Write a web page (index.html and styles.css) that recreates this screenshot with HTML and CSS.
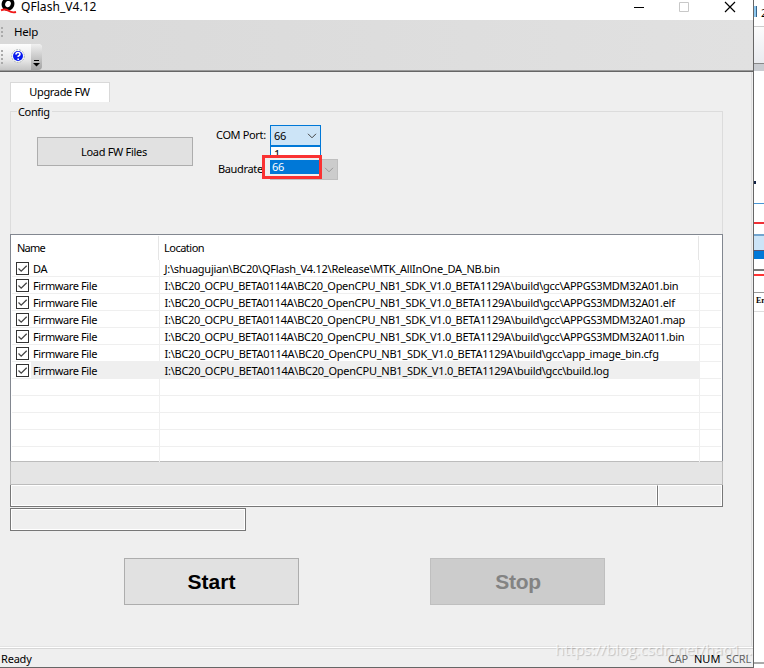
FILE: index.html
```html
<!DOCTYPE html>
<html lang="en">
<head>
<meta charset="utf-8">
<title>QFlash_V4.12</title>
<link rel="stylesheet" href="styles.css">
</head>
<body>
<div class="screen">
  <main class="window">
    <header class="titlebar">
      <svg class="logo" width="18" height="14" viewBox="0 0 18 14"><ellipse cx="8" cy="4" rx="4.500" ry="5" fill="none" stroke="#000" stroke-width="3.600" transform="rotate(25 8 4)"/><path d="M1 10.300Q5 8.500 8.500 10.800T16 12" fill="none" stroke="#f01818" stroke-width="1.900"/></svg>
      <span class="title">QFlash_V4.12</span>
      <svg class="caption" width="102" height="14" viewBox="0 0 102 14" fill="none"><path d="M0 7.500H10" stroke="#000"/><path d="M45.500 2.500H54.500V11.500H45.500Z" stroke="#c8c8c8"/><path d="M91 2L101 12M101 2L91 12" stroke="#000" stroke-width="1.200"/></svg>
    </header>
    <div class="bars">
      <div class="menubar"><i class="grip"></i><span class="help">Help</span></div>
      <div class="toolbar">
        <i class="grip tall"></i>
        <svg class="about" width="14" height="14" viewBox="0 0 14 14"><circle cx="7" cy="7" r="6.300" fill="#fff" stroke="#9aa5a5" stroke-width=".8" stroke-dasharray="2 1"/><circle cx="7" cy="7" r="5" fill="#0719ee"/><path d="M5 5.500Q5 3.500 7 3.500T9 5.300Q9 6.500 7.200 7.200V8M7.200 9.500V11" fill="none" stroke="#fff" stroke-width="1.600"/></svg>
        <span class="overflow"><svg width="7" height="8" viewBox="0 0 7 8"><path d="M1 1.500H6" stroke="#000"/><path d="M0 4H7L3.500 7.500Z"/></svg></span>
      </div>
    </div>
    <section class="content">
      <div class="tab"><span>Upgrade FW</span></div>
      <div class="config">
        <span class="legend">Config</span>
        <button class="load"><span>Load FW Files</span></button>
        <div class="ports">
          <div class="field"><label>COM Port:</label>
            <div class="combo"><span>66</span><svg width="10" height="6" viewBox="0 0 10 6"><path d="M1 .8L5 4.800L9 .8" fill="none" stroke="#444"/></svg>
              <div class="menu"><div class="one">1</div></div>
              <div class="mark"><div class="picked">66</div></div>
            </div>
          </div>
          <div class="field baud"><label>Baudrate:</label><div class="combo off"><svg width="10" height="6" viewBox="0 0 10 6"><path d="M1 .8L5 4.800L9 .8" fill="none" stroke="#999"/></svg></div></div>
        </div>
      </div>
      <div class="list">
        <div class="head"><span>Name</span><span>Location</span></div>
        <div class="row"><span class="name"><svg class="chk" width="13" height="13"><use href="#check"/></svg><b>DA</b></span><span class="loc">J:\shuagujian\BC20\QFlash_V4.12\Release\MTK_AllInOne_DA_NB.bin</span></div>
        <div class="row"><span class="name"><svg class="chk" width="13" height="13"><use href="#check"/></svg><b>Firmware File</b></span><span class="loc tight">I:\BC20_OCPU_BETA0114A\BC20_OpenCPU_NB1_SDK_V1.0_BETA1129A\build\gcc\APPGS3MDM32A01.bin</span></div>
        <div class="row"><span class="name"><svg class="chk" width="13" height="13"><use href="#check"/></svg><b>Firmware File</b></span><span class="loc tight">I:\BC20_OCPU_BETA0114A\BC20_OpenCPU_NB1_SDK_V1.0_BETA1129A\build\gcc\APPGS3MDM32A01.elf</span></div>
        <div class="row"><span class="name"><svg class="chk" width="13" height="13"><use href="#check"/></svg><b>Firmware File</b></span><span class="loc tight">I:\BC20_OCPU_BETA0114A\BC20_OpenCPU_NB1_SDK_V1.0_BETA1129A\build\gcc\APPGS3MDM32A01.map</span></div>
        <div class="row"><span class="name"><svg class="chk" width="13" height="13"><use href="#check"/></svg><b>Firmware File</b></span><span class="loc tight">I:\BC20_OCPU_BETA0114A\BC20_OpenCPU_NB1_SDK_V1.0_BETA1129A\build\gcc\APPGS3MDM32A011.bin</span></div>
        <div class="row"><span class="name"><svg class="chk" width="13" height="13"><use href="#check"/></svg><b>Firmware File</b></span><span class="loc">I:\BC20_OCPU_BETA0114A\BC20_OpenCPU_NB1_SDK_V1.0_BETA1129A\build\gcc\app_image_bin.cfg</span></div>
        <div class="row selected"><span class="name"><svg class="chk" width="13" height="13"><use href="#check"/></svg><b>Firmware File</b></span><span class="loc">I:\BC20_OCPU_BETA0114A\BC20_OpenCPU_NB1_SDK_V1.0_BETA1129A\build\gcc\build.log</span></div>
        <div class="row"><span class="name"></span><span class="loc"></span></div>
        <div class="row"><span class="name"></span><span class="loc"></span></div>
        <div class="row"><span class="name"></span><span class="loc"></span></div>
        <div class="row"><span class="name"></span><span class="loc"></span></div>
        <div class="row last"><span class="name"></span><span class="loc"></span></div>
      </div>
      <div class="progress"></div>
      <div class="panes"><div></div><div></div></div>
      <div class="pane"></div>
      <div class="actions"><button>Start</button><button disabled>Stop</button></div>
    </section>
    <footer class="status"><span class="ready">Ready</span><span class="cap">CAP</span><span class="num">NUM</span><span class="scrl">SCRL</span></footer>
  </main>
  <aside class="behind">
    <div class="b-top"><i></i><span>2</span></div>
    <div class="b-bar"></div>
    <div class="b-shade"></div>
    <div class="b-dot"></div>
    <div class="b-blue"></div>
    <div class="b-red"></div>
    <div class="b-combo"></div>
    <div class="b-pick"></div>
    <div class="b-gray"></div>
    <div class="b-red2"></div>
    <div class="b-line"></div>
    <div class="b-text">Err</div>
    <div class="b-end"></div>
  </aside>
  <div class="watermark">https://blog.csdn.net/hao1…</div>
</div>
<svg class="defs" width="0" height="0"><defs><g id="check"><rect x=".5" y=".5" width="12" height="12" fill="#fff" stroke="#333"/><path d="M2.500 6.500L5.200 9.200L10.700 3.700" fill="none" stroke="#444" stroke-width="1.300"/></g></defs></svg>
</body>
</html>
```
FILE: styles.css
```css
* { box-sizing: border-box; }
body { margin: 0; overflow: hidden; font: 11px/14px "Noto Sans", sans-serif; color: #000; }
button { font: inherit; color: inherit; padding: 0; margin: 0; border-radius: 0; }
.defs { position: absolute; }
.screen { position: relative; width: 764px; height: 668px; display: flex; overflow: hidden; background: #fff; }
.window { width: 754px; height: 668px; display: flex; flex-direction: column; background: #efefef; border-right: 1px solid #666; border-bottom: 1px solid #666; }

.titlebar { height: 20px; flex: none; display: flex; background: #fff; }
.logo { display: block; }
.title { font-size: 12px; margin-left: 3px; letter-spacing: .05px; width: 613px; }
.caption { flex: none; }

.bars { height: 52px; flex: none; background: linear-gradient(90deg, #d9d9d9, #e1e1e1); border-bottom: 1px solid #666; box-shadow: inset 0 -1px #999; }
.menubar { height: 24px; display: flex; align-items: center; }
.grip { width: 2px; height: 11px; margin-left: 1px; background: repeating-linear-gradient(#aaa 0 2px, transparent 2px 4px); }
.help { margin-left: 11px; letter-spacing: -.2px; font-size: 11.500px; }
.toolbar { width: 42px; height: 26px; display: flex; align-items: center; border-radius: 0 4px 4px 0; background: linear-gradient(#fdfdfd, #e8e8e8 60%, #c5c5c5); }
.grip.tall { height: 15px; }
.about { margin: -2px 0 0 8px; flex: none; }
.overflow { width: 11px; height: 26px; margin-left: auto; display: flex; align-items: flex-end; justify-content: center; padding-bottom: 3px; border-radius: 0 4px 4px 0; background: linear-gradient(#f0f0f0, #a2a2a2); }

.content { flex: 1; width: 752px; padding: 10px 0 0 10px; border-right: 1px solid #dfdfdf; }
.tab { width: 100px; height: 20px; background: #fff; border: 1px solid #d9d9d9; border-bottom: 0; text-align: center; line-height: 18px; letter-spacing: -.35px; }
.tab span { margin-right: 1px; }
.config { position: relative; width: 713px; height: 123px; margin-top: 9px; border: 1px solid #dcdcdc; border-bottom: 0; display: flex; }
.legend { position: absolute; left: 6px; top: -7px; padding: 0 2px 0 1px; background: #efefef; letter-spacing: -.35px; }
.load { width: 156px; height: 29px; margin: 25px 0 0 26px; background: #e1e1e1; border: 1px solid #adadad; letter-spacing: -.3px; }
.load span { margin-right: 2px; }
.ports { margin: 13px 0 0 23px; }
.field { display: flex; height: 34px; }
.field label { width: 54px; line-height: 19px; white-space: nowrap; letter-spacing: -.35px; }
.baud label { padding-left: 2px; }
.combo { position: relative; width: 51px; height: 21px; border: 1px solid #0078d7; background: #cce4f7; display: flex; align-items: center; justify-content: space-between; padding: 0 3px; letter-spacing: -.3px; }
.combo.off { width: 68px; background: #ccc; border-color: #bfbfbf; justify-content: flex-end; }
.menu { position: absolute; left: -1px; top: 20px; width: 51px; height: 22px; background: #fff; border: 1px solid #0078d7; }
.one { padding-left: 3px; line-height: 14px; }
.mark { position: absolute; z-index: 2; left: -9px; top: 29px; width: 60px; height: 24px; border: 3px solid #fa3232; background: #efefef; padding: 2px 0 0 5px; }
.picked { height: 14px; line-height: 14px; padding-left: 2px; background: #0078d7; color: #fff; }

.list { width: 713px; height: 227px; padding: 1px 1px 0 1px; background: #fff; border: 1px solid #828790; border-bottom: 0; }
.head { height: 24px; display: flex; line-height: 24px; letter-spacing: -.5px; background: linear-gradient(#e5e5e5, #e5e5e5) 686px 0/1px 24px no-repeat; }
.head span { padding-left: 5px; }
.head span:first-child { width: 147px; border-right: 1px solid #e5e5e5; letter-spacing: -.8px; }
.row { height: 17px; display: flex; line-height: 18px; border-bottom: 1px solid #efefef; }
.row.last { height: 15px; border-bottom: 0; }
.name { width: 148px; border-right: 1px solid #efefef; padding: 0 0 0 4px; display: flex; }
.name b { font-weight: normal; margin-left: 2px; padding-left: 2px; flex: 1; letter-spacing: -.4px; }
.chk { display: block; flex: none; margin-top: 2px; }
.loc { width: 540px; border-right: 1px solid #efefef; padding-left: 4.500px; white-space: nowrap; letter-spacing: -.25px; }
.loc.tight { letter-spacing: -.29px; }
.selected .name b, .selected .loc { background: #efefef; }

.progress { width: 713px; height: 24px; background: #e5e5e5; border: 1px solid #bcbcbc; }
.panes { width: 713px; height: 22px; display: flex; border: 1px solid #777; border-top: 0; }
.panes div { flex: 1; border: 1px solid #fff; }
.panes div:first-child { flex: none; width: 647px; border-right: 1px solid #777; box-shadow: inset -1px 0 #fff; }
.pane { width: 236px; height: 23px; margin-top: 1px; border: 1px solid #777; box-shadow: inset 0 0 0 1px #fff; }
.actions { display: flex; gap: 131px; margin: 27px 0 0 114px; }
.actions button { width: 175px; height: 47px; background: #e1e1e1; border: 1px solid #adadad; font: bold 21px "Liberation Sans", sans-serif; }
.actions button:disabled { background: #ccc; border-color: #bfbfbf; color: #838383; letter-spacing: -.3px; padding-left: 1px; }

.status { height: 19px; flex: none; display: flex; line-height: 19px; border-top: 1px solid #d7d7d7; box-shadow: 0 -1px #fff, 0 -2px #e3e3e3; }
.ready { width: 668px; padding-left: 1px; letter-spacing: -.2px; }
.cap { width: 26px; color: #666; letter-spacing: -.2px; }
.num { width: 32px; }
.scrl { color: #666; letter-spacing: -.1px; }

.behind { width: 10px; height: 668px; overflow: hidden; background: #fff; }
.b-top { height: 26px; display: flex; gap: 4px; padding-top: 6px; }
.b-top i { flex: none; width: 3px; height: 11px; background: #8ec8ef; border-right: 1px solid #37658b; }
.b-bar { height: 38px; border-top: 1px solid #ccc; border-bottom: 1px solid #888; background: linear-gradient(#fcfcfc, #e9ebef); }
.b-shade { height: 7px; background: #c9ccd1; }
.b-dot { width: 2px; height: 3px; margin-top: 110px; background: #124; }
.b-blue { height: 1px; margin-top: 19px; background: #4795d5; }
.b-red { height: 2px; margin-top: 18px; background: #ef2f35; }
.b-combo { height: 16px; margin-top: 10px; border-top: 2px solid #72a5cf; background: #cce4f7; }
.b-pick { height: 9px; background: #0078d7; border-top: 1px solid #557; }
.b-gray { height: 2px; margin-top: 10px; background: #777; }
.b-red2 { height: 2px; margin-top: 3px; background: #f33; }
.b-line { height: 17px; border-bottom: 1px solid #999; }
.b-text { height: 19px; padding-left: 2px; font: bold 8px/16px "Liberation Serif", serif; border-bottom: 1px solid #ddd; }
.b-end { height: 2px; margin-top: 350px; background: #aaa; }
.watermark { position: absolute; left: 555px; top: 640px; font: 15px/18px "Open Sans", sans-serif; color: rgba(255, 255, 255, .65); text-shadow: 1px 1px 1px rgba(0, 0, 0, .2); white-space: nowrap; }
```
